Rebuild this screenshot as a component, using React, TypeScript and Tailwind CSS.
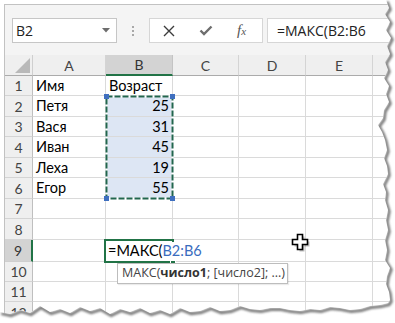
import React from "react";

type Row = {
  n: string;
  h: string;
  a?: string;
  b?: string;
  num?: boolean;
  active?: boolean;
};

const rows: Row[] = [
  { n: "1", h: "h-[20px]", a: "Имя", b: "Возраст" },
  { n: "2", h: "h-[21px]", a: "Петя", b: "25", num: true },
  { n: "3", h: "h-[20px]", a: "Вася", b: "31", num: true },
  { n: "4", h: "h-[21px]", a: "Иван", b: "45", num: true },
  { n: "5", h: "h-[20px]", a: "Леха", b: "19", num: true },
  { n: "6", h: "h-[21px]", a: "Егор", b: "55", num: true },
  { n: "7", h: "h-[20px]" },
  { n: "8", h: "h-[21px]" },
  { n: "9", h: "h-[22px]", active: true },
  { n: "10", h: "h-[20px]" },
  { n: "11", h: "h-[20px]" },
  { n: "12", h: "h-[21px]" },
];

const edge =
  "386,0 389,8 385,14 390,22 386,30 391,38 387,46 390,54 385,62 388,70 384,78 389,86 386,94 389,102 384,110 383,118 378,125 382,132 385,140 387,150 384,158 387,166 388,174 383,184 386,192 385,200 388,210 386,220 388,230 385,240 387,250 385,260 390,268 387,276 386,284 389,292 390,300 388,303 380,305 370,306 360,309 350,310 340,308 330,307 320,310 310,309 300,311 290,310 280,308 270,308 260,310 250,309 240,306 230,310 220,311 210,307 200,311 190,312 180,308 170,314 160,310 150,313 140,308 130,312 120,309 110,314 100,308 90,311 80,307 70,313 60,309 50,312 40,306 30,313 20,310 10,314 0,312";

function TornOverlay() {
  const outside = `M ${edge.split(" ").join(" L ")} L 0 323 L 395 323 L 395 0 Z`;
  return (
    <svg
      className="absolute left-0 top-0 pointer-events-none"
      width="395"
      height="323"
      viewBox="0 0 395 323"
    >
      <defs>
        <clipPath id="outside">
          <path d={outside} />
        </clipPath>
        <filter id="blur" x="-5%" y="-5%" width="110%" height="110%">
          <feGaussianBlur stdDeviation="1.1" />
        </filter>
      </defs>
      <path d={outside} fill="#ffffff" />
      <g clipPath="url(#outside)">
        <polyline
          points={edge}
          fill="none"
          stroke="#7a7a7a"
          strokeWidth="3"
          transform="translate(1.2 1.6)"
          filter="url(#blur)"
        />
      </g>
    </svg>
  );
}

function FormulaBar() {
  return (
    <div className="h-[50px] flex items-start pt-[13px] pl-[7px] shrink-0">
      <div className="shrink-0 w-[105px] h-[25px] bg-white border border-[#c6c6c6] flex items-center justify-between pl-[3px] pr-[6px]">
        <span className="font-['Open_Sans',sans-serif] text-[14px] text-[#222] leading-none">B2</span>
        <svg width="8" height="5" viewBox="0 0 8 5">
          <path d="M0 0 L8 0 L4 4.5 Z" fill="#6d6d6d" />
        </svg>
      </div>
      <div className="shrink-0 ml-[15px] h-[25px] flex flex-col justify-center gap-[2px]">
        <div className="w-[2px] h-[2px] bg-[#a8a8a8]" />
        <div className="w-[2px] h-[2px] bg-[#a8a8a8]" />
        <div className="w-[2px] h-[2px] bg-[#a8a8a8]" />
      </div>
      <div className="shrink-0 ml-[15px] w-[114px] h-[25px] bg-white border border-[#d6d6d6] flex items-center">
        <svg className="ml-[13px]" width="12" height="12" viewBox="0 0 12 12">
          <path d="M1 1 L11 11 M11 1 L1 11" stroke="#3c3c3c" strokeWidth="1.4" fill="none" />
        </svg>
        <svg className="ml-[24px]" width="14" height="11" viewBox="0 0 14 11">
          <path d="M1.5 5.5 L5 9 L12.5 1.5" stroke="#6e6e6e" strokeWidth="2.4" fill="none" />
        </svg>
        <span className="ml-[24px] font-['Liberation_Serif',serif] italic text-[#555] text-[15px] leading-none">
          f<span className="text-[11px]">x</span>
        </span>
      </div>
      <div className="shrink-0 ml-[4px] w-[140px] h-[25px] bg-white border border-[#d6d6d6] flex items-center pl-[9px]">
        <span className="font-['Open_Sans',sans-serif] text-[14px] text-[#222] leading-none whitespace-nowrap">
          =МАКС(B2:B6
        </span>
      </div>
    </div>
  );
}

function HeaderRow() {
  const cols = [
    { l: "A", w: "w-[73px]", sel: false },
    { l: "B", w: "w-[67px]", sel: true },
    { l: "C", w: "w-[66px]", sel: false },
    { l: "D", w: "w-[67px]", sel: false },
    { l: "E", w: "w-[67px]", sel: false },
    { l: "", w: "w-[80px]", sel: false },
  ];
  return (
    <div className="flex h-[21px]">
      <div className="shrink-0 w-[28px] h-full bg-[#efefef] border-r border-b border-r-[#cfcfcf] border-b-[#ababab] relative">
        <svg className="absolute left-[10px] top-[3px]" width="15" height="15" viewBox="0 0 15 15">
          <path d="M15 0 L15 15 L0 15 Z" fill="#b9b9b9" />
        </svg>
      </div>
      {cols.map((c) =>
        c.sel ? (
          <div
            key={c.l}
            className={`${c.w} shrink-0 h-full bg-[#d3d3d3] border-r border-r-[#c4c4c4] border-b-2 border-b-[#217346] flex items-center justify-center text-[14px] text-[#333]`}
          >
            {c.l}
          </div>
        ) : (
          <div
            key={c.l + c.w}
            className={`${c.w} shrink-0 h-full bg-[#efefef] border-r border-r-[#d4d4d4] border-b border-b-[#ababab] flex items-center justify-center text-[14px] text-[#444]`}
          >
            {c.l}
          </div>
        )
      )}
    </div>
  );
}

function DataRow({ r }: { r: Row }) {
  const inRange = !!r.num;
  return (
    <div className={`flex ${r.h}`}>
      {r.active ? (
        <div className="shrink-0 w-[28px] h-full bg-[#d3d3d3] border-r-2 border-r-[#217346] border-b border-b-[#cfcfcf] flex items-center justify-center text-[14px] text-[#333]">
          {r.n}
        </div>
      ) : (
        <div className="shrink-0 w-[28px] h-full bg-[#efefef] border-r border-b border-r-[#bfbfbf] border-b-[#d4d4d4] flex items-center justify-center text-[14px] text-[#444]">
          {r.n}
        </div>
      )}
      <div className="shrink-0 w-[73px] h-full border-r border-b border-[#dadada] flex items-center pl-[3px] text-[14.5px] text-black">
        {r.a}
      </div>
      {inRange ? (
        <div className="shrink-0 w-[67px] h-full bg-[#dde6f4] border-r border-b border-[#dadada] flex items-center justify-end pr-[3px] text-[14.5px] text-black">
          {r.b}
        </div>
      ) : (
        <div className="shrink-0 w-[67px] h-full border-r border-b border-[#dadada] flex items-center pl-[3px] text-[14.5px] text-black whitespace-nowrap">
          {r.b}
        </div>
      )}
      <div className="shrink-0 w-[66px] h-full border-r border-b border-[#dadada]" />
      <div className="shrink-0 w-[67px] h-full border-r border-b border-[#dadada]" />
      <div className="shrink-0 w-[67px] h-full border-r border-b border-[#dadada]" />
      <div className="shrink-0 w-[80px] h-full border-r border-b border-[#dadada]" />
    </div>
  );
}

function Grid() {
  return (
    <div className="relative bg-white font-['Lato',sans-serif]">
      <HeaderRow />
      {rows.map((r) => (
        <DataRow key={r.n} r={r} />
      ))}

      {/* range B2:B6 marquee */}
      <svg className="absolute left-[98px] top-[38px]" width="74" height="110" viewBox="0 0 74 110">
        <rect x="3.5" y="3.5" width="66" height="102" fill="none" stroke="#ffffff" strokeWidth="2" />
        <rect
          x="3.5"
          y="3.5"
          width="66"
          height="102"
          fill="none"
          stroke="#22664f"
          strokeWidth="2"
          strokeDasharray="6 2"
        />
        <rect x="1" y="1" width="5" height="5" fill="#3f6fbf" />
        <rect x="67" y="1" width="5" height="5" fill="#3f6fbf" />
        <rect x="1" y="103" width="5" height="5" fill="#3f6fbf" />
        <rect x="67" y="103" width="5" height="5" fill="#3f6fbf" />
      </svg>

      {/* active cell B9 */}
      <div className="absolute left-[99px] top-[184px] w-[70px] h-[24px] border-2 border-[#217346]" />
      <div className="absolute left-[165px] top-[205px] w-[6px] h-[6px] bg-[#217346] border border-white" />
      <div className="absolute left-[102px] top-[187px] w-[92px] h-[18px] bg-white flex items-center pl-[1px] whitespace-nowrap text-[14.5px] leading-none text-black">
        <span>=МАКС(</span>
        <span className="text-[#3a6cbe]">B2:B6</span>
        <span className="ml-[1px] w-[2px] h-[19px] bg-black" />
      </div>

      {/* tooltip */}
      <div className="absolute left-[112px] top-[208px] w-[171px] h-[21px] bg-white border border-[#bdbdbd] flex items-center pl-[4px] font-['Open_Sans',sans-serif] text-[12.5px] text-[#444] whitespace-nowrap shadow-[1px_1px_1px_rgba(0,0,0,0.08)]">
        МАКС(<span className="font-bold text-[#333]">число1</span>; [число2]; ...)
      </div>

      {/* mouse cursor */}
      <svg className="absolute left-[286px] top-[178px]" width="20" height="20" viewBox="0 0 20 20">
        <path
          d="M7.5 2.5 H12.5 V7.5 H17.5 V12.5 H12.5 V17.5 H7.5 V12.5 H2.5 V7.5 H7.5 Z"
          fill="#000"
          opacity="0.25"
          transform="translate(1 1)"
        />
        <path
          d="M6.5 1.5 H11.5 V6.5 H16.5 V11.5 H11.5 V16.5 H6.5 V11.5 H1.5 V6.5 H6.5 Z"
          fill="#fff"
          stroke="#000"
          strokeWidth="1.6"
        />
      </svg>
    </div>
  );
}

export default function App() {
  return (
    <div className="relative w-[395px] h-[323px] bg-white overflow-hidden pt-[4px] pl-[4px]">
      <div className="w-[480px] h-[340px] bg-[#f4f4f4] border-l border-t border-[#c2c2c2] flex flex-col">
        <FormulaBar />
        <Grid />
      </div>
      <TornOverlay />
    </div>
  );
}
